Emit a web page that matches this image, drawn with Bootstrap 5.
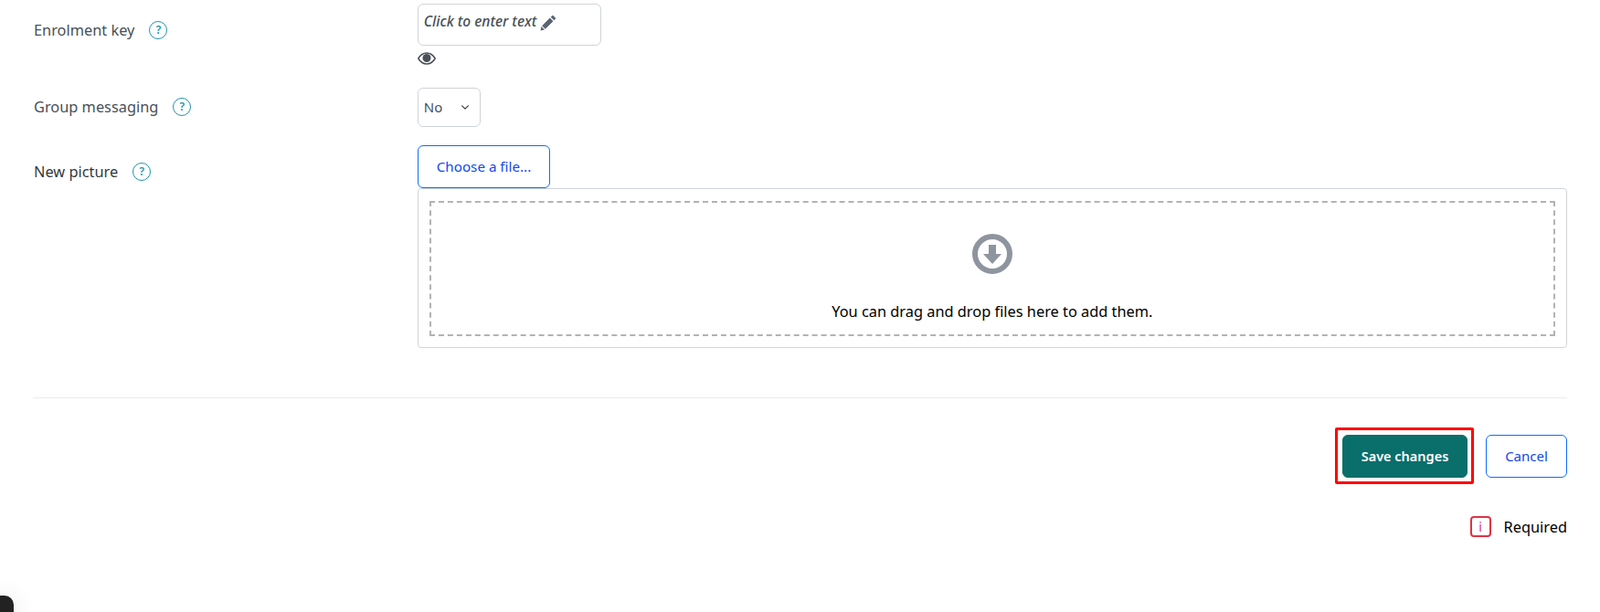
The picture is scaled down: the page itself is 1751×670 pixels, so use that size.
<!DOCTYPE html>
<html lang="en">
<head>
<meta charset="utf-8">
<title>Course settings</title>
<link href="https://cdn.jsdelivr.net/npm/bootstrap@5.3.0/dist/css/bootstrap.min.css" rel="stylesheet">
<style>
html,body{height:670px;overflow:hidden}
body{font-family:"Noto Sans","Open Sans",sans-serif;font-size:16.35px;color:#000;background:#fff}
.pg{padding:4px 36px 0 36px}
.lab{padding-left:1px;color:#495057;line-height:22px;gap:16px}
.lab.dark{color:#343a40}
.hlp{width:20px;height:20px;border:1.7px solid #1f93a8;color:#1f93a8;font-size:12px;font-weight:600;line-height:1}
.rowa{height:83px}
.rowb{height:72px}
.rowa .lab{padding-top:18px}
.rowb .lab{padding-top:19px}
.rowc .lab{padding-top:18px}
.ctl{padding-left:1px}
.keybox{width:201px;height:46px;border:1px solid #ced4da;border-radius:6px;padding:7px 6px;color:#495057;font-style:italic;font-weight:500;font-size:15.6px;line-height:22px;white-space:nowrap}
.eye{display:block;margin-top:7px}
.sel.form-select{width:69px;height:43px;font-size:15px;color:#495057;padding:0 24px 0 6px;background-position:right 10px center;background-size:12px 9px;border-radius:6px;border-color:#ced4da;margin-top:9px}
.btn-file{font-size:15.2px;border-radius:6px;height:47px;padding:0 20px;color:#0f47ef;border-color:#0f6cff;background:#fff;line-height:1}
.drop{height:175px;border:1px solid #ced4da;border-radius:4px;padding:13px 12px}
.dash{height:148px;border:2px dashed #b3b3b3;padding-top:34px}
.droptxt{margin-top:30px;line-height:22px}
.sep{margin:54px 0 0;border-top:1px solid #e9ecef;opacity:1}
.act{margin-top:40px;gap:20px}
.redbox{border:3px solid #f00;border-radius:2px;padding:5px 4px 4px 5px;margin:-8px -7px -7px -8px}
.bsave{display:block;width:137px;height:47px;background:#0a6e6b;border-color:#0a6e6b;color:#fff;font-weight:600;font-size:14.500px;border-radius:6px;padding:0}
.bsave:hover{background:#0a6e6b;border-color:#0a6e6b;color:#fff}
.bcancel{width:89px;height:47px;font-size:15px;color:#0f47ef;border-color:#0f6cff;background:#fff;border-radius:6px;padding:0}
.reqline{margin-top:42px;gap:14px;line-height:22px}
.reqi{width:23px;height:23px;border:2px solid #dc3545;border-radius:4px;color:#d63384;font-size:14px;line-height:1}
.blob{position:fixed;left:0;bottom:-10px;width:15px;height:28px;background:#222;border-top-right-radius:10px;box-shadow:0 0 24px rgba(0,0,0,.12)}
</style>
</head>
<body>
<div class="pg">
  <form>
    <div class="row gx-0 rowa">
      <div class="col-3"><div class="lab d-flex align-items-center">Enrolment key <span class="hlp rounded-circle d-inline-flex align-items-center justify-content-center">?</span></div></div>
      <div class="col-9 ctl">
        <div class="keybox">Click to enter text
          <svg width="18" height="18" viewBox="0 0 18 18" fill="#5b6470"><path d="M13.2 1.200a1 1 0 0 1 1.400 0l2.200 2.200a1 1 0 0 1 0 1.400l-1.500 1.500-3.600-3.600zM10.800 3.600l3.600 3.600-8.600 8.600-3.600-3.600zM1.500 13L5 16.500.5 17.500z"/></svg>
        </div>
        <svg class="eye" width="20" height="14" viewBox="0 0 20 14"><path d="M.8 7C3 3.300 6.200 1 10 1s7 2.300 9.200 6C17 10.700 13.800 13 10 13S3 10.700.8 7z" fill="none" stroke="#495057" stroke-width="1.500"/><circle cx="10" cy="6.500" r="4.500" fill="#495057"/></svg>
      </div>
    </div>
    <div class="row gx-0 rowb">
      <div class="col-3"><div class="lab d-flex align-items-center">Group messaging <span class="hlp rounded-circle d-inline-flex align-items-center justify-content-center">?</span></div></div>
      <div class="col-9 ctl"><select class="form-select sel" aria-label="Group messaging"><option>No</option><option>Yes</option></select></div>
    </div>
    <div class="row gx-0 rowc">
      <div class="col-3"><div class="lab dark d-flex align-items-center">New picture <span class="hlp rounded-circle d-inline-flex align-items-center justify-content-center">?</span></div></div>
      <div class="col-9 ctl">
        <button type="button" class="btn btn-outline-primary btn-file d-block">Choose a file...</button>
        <div class="drop">
          <div class="dash text-center">
            <svg width="44" height="44" viewBox="0 0 44 44" class="d-block mx-auto"><circle cx="22" cy="22" r="19" fill="none" stroke="#8f959e" stroke-width="6"/><path d="M18 12h8v10h6L22 33 12 22h6z" fill="#8f959e"/></svg>
            <div class="droptxt">You can drag and drop files here to add them.</div>
          </div>
        </div>
      </div>
    </div>
    <hr class="sep">
    <div class="act d-flex justify-content-end">
      <div class="redbox"><button type="button" class="btn bsave">Save changes</button></div>
      <button type="button" class="btn bcancel">Cancel</button>
    </div>
    <div class="reqline d-flex justify-content-end align-items-center">
      <span class="reqi d-inline-flex align-items-center justify-content-center">i</span>
      <span>Required</span>
    </div>
  </form>
</div>
<div class="blob"></div>
<script src="https://cdn.jsdelivr.net/npm/bootstrap@5.3.0/dist/js/bootstrap.bundle.min.js"></script>
</body>
</html>
